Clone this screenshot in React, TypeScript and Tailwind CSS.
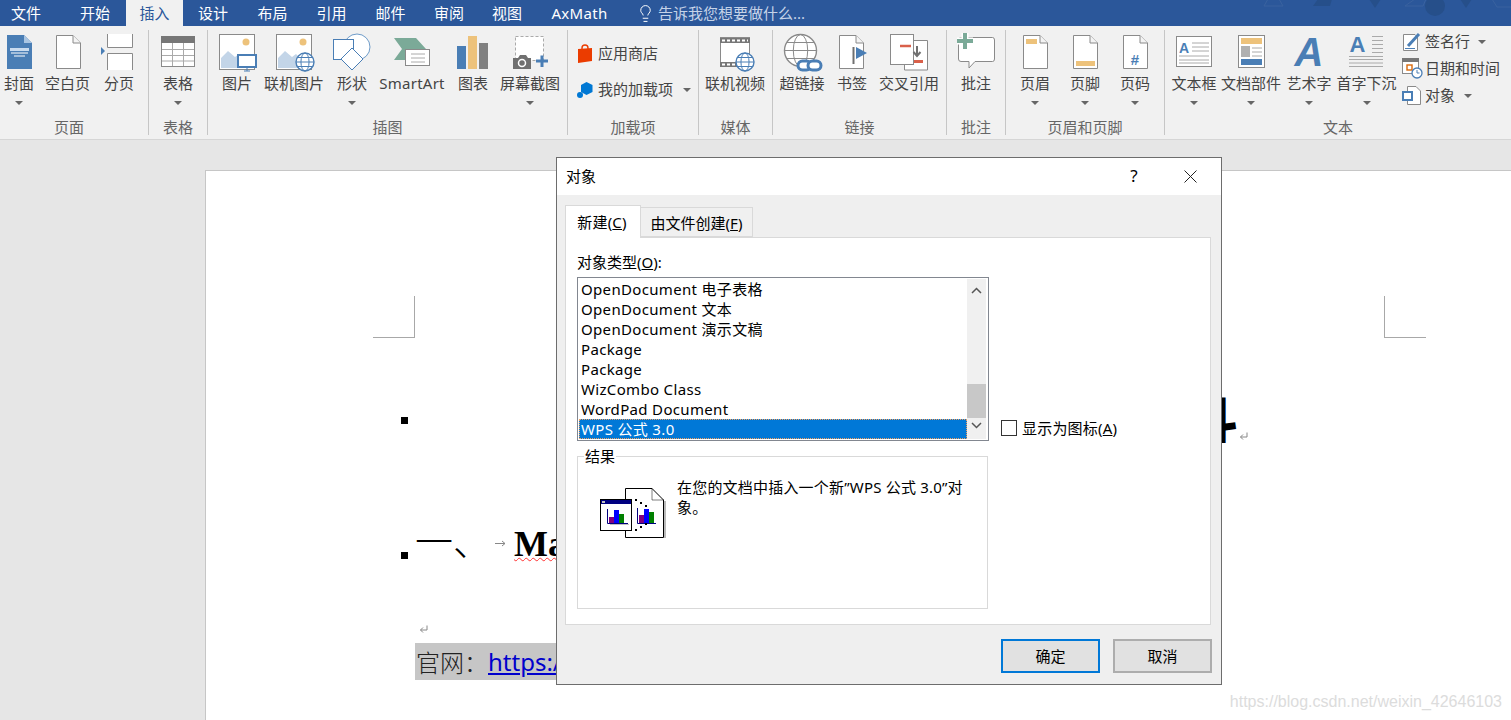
import { Lightbulb } from 'lucide-react';
import type { ReactNode } from 'react';

const BLUE = '#4a7eb5';
const GRAY = '#8a8a8a';
const YELLOW = '#edc27b';
const GREEN = '#7baa98';
const RED = '#d9604a';

function Caret() {
  return <span className="block h-0 w-0 border-x-[4px] border-t-[4px] border-x-transparent border-t-[#666]" />;
}

function Icon({ children }: { children: ReactNode }) {
  return (
    <svg width="40" height="36" viewBox="0 0 40 36" className="overflow-visible" fill="none">
      {children}
    </svg>
  );
}

function Page({ x = 8, fill = 'white' }: { x?: number; fill?: string }) {
  return (
    <>
      <path d={`M${x + 0.5} 2.5H${x + 17}L${x + 24.5} 10V35.5H${x + 0.5}Z`} fill={fill} stroke={GRAY} />
      <path d={`M${x + 17} 2.5V10H${x + 24.5}`} stroke={GRAY} fill="#f4f4f4" />
    </>
  );
}

function Globe({ cx, cy, r = 9, color = BLUE }: { cx: number; cy: number; r?: number; color?: string }) {
  return (
    <g stroke={color} fill="white">
      <circle cx={cx} cy={cy} r={r} strokeWidth="1.4" />
      <ellipse cx={cx} cy={cy} rx={r * 0.45} ry={r} fill="none" />
      <path d={`M${cx - r} ${cy}H${cx + r}M${cx - r * 0.85} ${cy - r * 0.5}H${cx + r * 0.85}M${cx - r * 0.85} ${cy + r * 0.5}H${cx + r * 0.85}`} />
    </g>
  );
}

function Picture({ children }: { children: ReactNode }) {
  return (
    <Icon>
      <rect x="2.5" y="1.5" width="35" height="35" fill="white" stroke={GRAY} />
      <circle cx="29" cy="9" r="3.5" fill={YELLOW} />
      <path d="M4 35V25L11 18L18 24L22 21L28 27V35Z" fill="#c3d5e8" />
      {children}
    </Icon>
  );
}

const icons: Record<string, ReactNode> = {
  cover: (
    <Icon>
      <path d="M8 2H25L33 10V36H8Z" fill={BLUE} />
      <path d="M25 2L33 10H25Z" fill="#a9c5e2" />
      <path d="M11 15H30V18H11Z" fill="#c9dbee" />
      <path d="M12 20H29M15 23H26" stroke="white" />
    </Icon>
  ),
  blank: (
    <Icon>
      <Page />
    </Icon>
  ),
  pageBreak: (
    <Icon>
      <path d="M8.5 1V14.5H33.5V1M8.5 37V20.5H33.5V37" fill="white" stroke={GRAY} />
      <path d="M2 14L6 18L2 22Z" fill={BLUE} />
    </Icon>
  ),
  table: (
    <Icon>
      <rect x="3.5" y="3.5" width="33" height="30" fill="white" stroke={GRAY} />
      <rect x="3" y="3" width="34" height="7" fill="#777" />
      <path d="M14.5 10V33M25.5 10V33M4 16.5H36M4 22.5H36M4 28H36" stroke="#aaa" />
    </Icon>
  ),
  picture: (
    <Picture>
      <rect x="21" y="22" width="18" height="12" fill="white" stroke={BLUE} strokeWidth="2" />
      <path d="M30 35V38M27 38H33" stroke={BLUE} />
    </Picture>
  ),
  onlinePicture: (
    <Picture>
      <Globe cx={31} cy={29} />
    </Picture>
  ),
  shapes: (
    <Icon>
      <circle cx="25" cy="14" r="13" fill="white" stroke="#6f9cc9" />
      <rect x="1.5" y="6.5" width="20" height="20" fill="white" stroke={BLUE} />
      <path d="M20 15L31 26L20 37L9 26Z" fill="white" stroke={BLUE} />
    </Icon>
  ),
  smartArt: (
    <Icon>
      <path d="M2 5H24L34 16L24 27H2L10 16Z" fill={GREEN} />
      <rect x="13.5" y="16.5" width="24" height="16" fill="white" stroke={GRAY} />
      <path d="M19 21H33M19 25H33M19 29H33" stroke="#aaa" />
    </Icon>
  ),
  chart: (
    <Icon>
      <rect x="4" y="13" width="9" height="23" fill={BLUE} />
      <rect x="15" y="3" width="9" height="33" fill={YELLOW} />
      <rect x="26" y="10" width="9" height="26" fill="#808080" />
    </Icon>
  ),
  screenshot: (
    <Icon>
      <rect x="5.5" y="3.5" width="28" height="24" fill="white" stroke="#aaa" strokeDasharray="3 2" />
      <path d="M3 25H8L10 22H16L18 25H21V36H3Z" fill="#707070" />
      <circle cx="12" cy="30" r="3.5" fill="#707070" stroke="white" strokeWidth="1.5" />
      <path d="M32 22.5V34M26 28H38" stroke={BLUE} strokeWidth="3" />
    </Icon>
  ),
  video: (
    <Icon>
      <rect x="5.5" y="4.5" width="29" height="29" fill="white" stroke={GRAY} />
      <path d="M5 5H35V10H5ZM5 29H30V34H5Z" fill="#777" />
      <path d="M7 7.5H33M7 31.5H28" stroke="white" strokeWidth="2" strokeDasharray="3 2" />
      <Globe cx={30} cy={29} />
    </Icon>
  ),
  hyperlink: (
    <Icon>
      <Globe cx={18.5} cy={17.5} r={16} color={GRAY} />
      <g fill="white" stroke={BLUE} strokeWidth="3">
        <rect x="16" y="28" width="13" height="9" rx="4.5" />
        <rect x="26" y="28" width="13" height="9" rx="4.5" />
      </g>
    </Icon>
  ),
  bookmark: (
    <Icon>
      <Page x={7} />
      <path d="M21.5 14V31" stroke="#707070" strokeWidth="2" />
      <path d="M24 14L35 20L24 26Z" fill={BLUE} />
    </Icon>
  ),
  crossRef: (
    <Icon>
      <path d="M15.5 7.5H38.5V37H15.5Z" fill="white" stroke={GRAY} />
      <rect x="1.5" y="1.5" width="23" height="30" fill="white" stroke={GRAY} />
      <path d="M11 13H22" stroke={RED} strokeWidth="2.5" />
      <path d="M28 13V22M24.5 19L28 23L31.5 19" stroke="#707070" strokeWidth="2" />
      <path d="M25 28.5H34" stroke={RED} strokeWidth="3" />
    </Icon>
  ),
  comment: (
    <Icon>
      <path d="M5 4.5H36.5Q38.5 4.5 38.5 7V26Q38.5 28.5 36.5 28.5H19L13 35V28.5H5Q2.5 28.5 2.5 26V7Q2.5 4.5 5 4.5Z" fill="white" stroke={GRAY} />
      <path d="M9 0V16M1 8H17" stroke="white" strokeWidth="7" />
      <path d="M9 0V16M1 8H17" stroke={GREEN} strokeWidth="4" />
    </Icon>
  ),
  header: (
    <Icon>
      <Page />
      <rect x="11" y="6" width="11" height="5" fill={YELLOW} />
    </Icon>
  ),
  footer: (
    <Icon>
      <Page />
      <rect x="11" y="28" width="19" height="5" fill={YELLOW} />
    </Icon>
  ),
  pageNumber: (
    <Icon>
      <Page />
      <text x="20" y="32" textAnchor="middle" fontSize="15" fontWeight="700" fill={BLUE} fontFamily="Liberation Sans">
        #
      </text>
    </Icon>
  ),
  textBox: (
    <Icon>
      <rect x="2.5" y="3.5" width="35" height="30" fill="white" stroke={GRAY} />
      <text x="10" y="20" textAnchor="middle" fontSize="14" fontWeight="700" fill={BLUE} fontFamily="Liberation Sans">
        A
      </text>
      <path d="M18 10H35M18 14H35M18 18H35M5 23H35M5 27H35M5 30H35" stroke="#aaa" />
    </Icon>
  ),
  parts: (
    <Icon>
      <rect x="7.5" y="2.5" width="26" height="32" fill="white" stroke={GRAY} />
      <rect x="10" y="5" width="21" height="6" fill={YELLOW} />
      <rect x="10" y="13" width="9" height="11" fill="#b0b0b0" />
      <path d="M21 15H31M21 19H31M21 23H31" stroke="#aaa" />
      <rect x="10" y="26" width="21" height="6" fill={BLUE} />
    </Icon>
  ),
  wordArt: (
    <Icon>
      <text x="20" y="33" textAnchor="middle" fontSize="40" fontWeight="700" fontStyle="italic" fill={BLUE} fontFamily="Liberation Sans">
        A
      </text>
    </Icon>
  ),
  dropCap: (
    <Icon>
      <text x="10.5" y="19" textAnchor="middle" fontSize="22" fontWeight="700" fill={BLUE} fontFamily="Liberation Sans">
        A
      </text>
      <path d="M25 3.5H36M25 7.5H36M25 11.5H36M25 15.5H36M25 19.5H36M2 23.5H36M2 26.5H36M2 30H36M2 33.5H36" stroke="#aaa" />
    </Icon>
  ),
};

function RibbonButton({ w, label, icon, caret = false, labelClass = '' }: { w: string; label: string; icon: string; caret?: boolean; labelClass?: string }) {
  return (
    <div className={`flex shrink-0 flex-col items-center ${w}`}>
      <div className="mt-[3px] h-[36px] w-[40px]">{icons[icon]}</div>
      <span className={`mt-[5px] whitespace-nowrap leading-[18px] ${labelClass}`}>{label}</span>
      {caret && (
        <span className="mt-[9px]">
          <Caret />
        </span>
      )}
    </div>
  );
}

function Group({ w, label, labelClass = '', last = false, children }: { w: string; label: string; labelClass?: string; last?: boolean; children: ReactNode }) {
  return (
    <section className={`flex h-[105px] shrink-0 flex-col ${w} ${last ? '' : 'border-r border-[#c6c6c6]'}`}>
      <div className="flex h-[89px]">{children}</div>
      <div className={`text-center leading-[16px] text-[#666] ${labelClass}`}>{label}</div>
    </section>
  );
}

function SmallItem({ icon, label, caret, gap }: { icon: ReactNode; label: string; caret?: boolean; gap: string }) {
  return (
    <div className={`flex h-[27px] items-center whitespace-nowrap ${gap}`}>
      {icon}
      <span>{label}</span>
      {caret && (
        <span className="ml-[5px]">
          <Caret />
        </span>
      )}
    </div>
  );
}

function Ribbon() {
  return (
    <div className="flex h-[114px] border-b border-[#d6d6d6] bg-[#f1f1f1] pt-[4px] text-[15px] text-[#444]">
      <Group w="w-[149px]" label="页面" labelClass="pr-[10px]">
        <RibbonButton w="w-[38px]" label="封面" icon="cover" caret />
        <RibbonButton w="w-[59px]" label="空白页" icon="blank" />
        <RibbonButton w="w-[44px]" label="分页" icon="pageBreak" />
      </Group>
      <Group w="w-[59px]" label="表格">
        <RibbonButton w="w-[58px]" label="表格" icon="table" caret />
      </Group>
      <Group w="w-[360px]" label="插图">
        <RibbonButton w="w-[58px]" label="图片" icon="picture" />
        <RibbonButton w="w-[56px]" label="联机图片" icon="onlinePicture" />
        <RibbonButton w="w-[60px]" label="形状" icon="shapes" caret />
        <RibbonButton w="w-[60px]" label="SmartArt" icon="smartArt" labelClass="tracking-[0.25px]" />
        <RibbonButton w="w-[62px]" label="图表" icon="chart" />
        <RibbonButton w="w-[52px]" label="屏幕截图" icon="screenshot" caret />
      </Group>
      <Group w="w-[131px]" label="加载项">
        <div className="flex flex-col pl-[9px] pt-[10px]">
          <SmallItem
            gap="gap-[5px]"
            label="应用商店"
            icon={
              <svg width="16" height="20" viewBox="0 0 16 20" fill="none">
                <path d="M5 6V4Q5 1 8 1Q11 1 11 4V6" stroke="#eb3c00" strokeWidth="1.4" />
                <path d="M1 5L15 4V17L1 19Z" fill="#eb3c00" />
              </svg>
            }
          />
          <div className="mt-[9px]">
            <SmallItem
              gap="gap-[5px]"
              label="我的加载项"
              caret
              icon={
                <svg width="16" height="18" viewBox="0 0 16 18" fill="none">
                  <path d="M9.5 1L15.5 4V11L9.5 14L4 11V4Z" fill="#0078d4" />
                  <circle cx="3" cy="14" r="3" fill="#0078d4" />
                </svg>
              }
            />
          </div>
        </div>
      </Group>
      <Group w="w-[74px]" label="媒体">
        <RibbonButton w="w-[72px]" label="联机视频" icon="video" />
      </Group>
      <Group w="w-[174px]" label="链接">
        <RibbonButton w="w-[58px]" label="超链接" icon="hyperlink" />
        <RibbonButton w="w-[42px]" label="书签" icon="bookmark" />
        <RibbonButton w="w-[72px]" label="交叉引用" icon="crossRef" />
      </Group>
      <Group w="w-[59px]" label="批注">
        <RibbonButton w="w-[58px]" label="批注" icon="comment" />
      </Group>
      <Group w="w-[159px]" label="页眉和页脚">
        <RibbonButton w="w-[58px]" label="页眉" icon="header" caret />
        <RibbonButton w="w-[42px]" label="页脚" icon="footer" caret />
        <RibbonButton w="w-[58px]" label="页码" icon="pageNumber" caret />
      </Group>
      <Group w="w-[346px]" label="文本" last>
        <RibbonButton w="w-[58px]" label="文本框" icon="textBox" caret />
        <RibbonButton w="w-[56px]" label="文档部件" icon="parts" caret />
        <RibbonButton w="w-[60px]" label="艺术字" icon="wordArt" caret />
        <RibbonButton w="w-[55px]" label="首字下沉" icon="dropCap" caret />
        <div className="-mt-[2px] ml-[8px] flex flex-col">
          <SmallItem
            gap="gap-[3px]"
            label="签名行"
            caret
            icon={
              <svg width="20" height="20" viewBox="0 0 20 20" fill="none">
                <path d="M1.5 2.5H13L15.5 5V18.5H1.5Z" fill="white" stroke={GRAY} />
                <path d="M3 16.5H13" stroke={BLUE} />
                <path d="M6 14L17 2" stroke={BLUE} strokeWidth="3" />
              </svg>
            }
          />
          <SmallItem
            gap="gap-[2px]"
            label="日期和时间"
            icon={
              <svg width="21" height="21" viewBox="0 0 21 21" fill="none">
                <rect x="0.5" y="0.5" width="16" height="15" fill="white" stroke={GRAY} />
                <rect x="0" y="0" width="17" height="4" fill="#777" />
                <rect x="5" y="7" width="5" height="5" fill="white" stroke="#d9680a" strokeWidth="1.4" />
                <circle cx="15" cy="15" r="5" fill="white" stroke={BLUE} strokeWidth="1.3" />
                <path d="M15 12V15H17.5" stroke={BLUE} />
              </svg>
            }
          />
          <SmallItem
            gap="gap-[4px]"
            label="对象"
            caret
            icon={
              <svg width="19" height="19" viewBox="0 0 19 19" fill="none">
                <path d="M5.5 0.5H14L18.5 5V18.5H5.5Z" fill="white" stroke={GRAY} />
                <rect x="1" y="6" width="9" height="8" fill="white" stroke={BLUE} strokeWidth="2" />
              </svg>
            }
          />
        </div>
      </Group>
    </div>
  );
}

function TabBar() {
  return (
    <div className="relative flex h-[26px] items-center bg-[#2b579a] text-[15px] text-white">
      <span className="w-[52px] text-center">文件</span>
      <span className="ml-[17px] w-[52px] text-center">开始</span>
      <span className="ml-[5px] flex h-full w-[57px] items-center justify-center bg-[#f1f1f1] text-[#2b579a]">插入</span>
      <span className="w-[60px] text-center">设计</span>
      <span className="w-[59px] text-center">布局</span>
      <span className="w-[59px] text-center">引用</span>
      <span className="w-[59px] text-center">邮件</span>
      <span className="w-[58px] text-center">审阅</span>
      <span className="w-[58px] text-center">视图</span>
      <span className="w-[87px] text-center tracking-[0.3px]">AxMath</span>
      <Lightbulb className="ml-[13px] shrink-0" size={19} strokeWidth={1.25} />
      <span className="ml-[3px] text-[#c5d3e8]">告诉我您想要做什么...</span>
      <svg className="absolute right-0 top-0" width="251" height="26" viewBox="0 0 251 26" fill="none">
        <path d="M8 -1L4 6H23L19 -1" stroke="#3a629f" />
        <path d="M58 -1L53 6H70L72 -1Z" fill="#264f8a" />
        <path d="M109 -1L115 8L121 -1Z" fill="#264f8a" />
        <path d="M155 -1L145 6H163L166 -1" stroke="#3a629f" />
        <circle cx="175" cy="6" r="10" fill="#264f8a" />
        <path d="M200 -1L206 8L212 -1Z" fill="#264f8a" />
        <path d="M232 -1L237 7H251" stroke="#3a629f" />
      </svg>
    </div>
  );
}

function Pilcrow() {
  return (
    <svg width="9" height="9" viewBox="0 0 9 9" fill="none" stroke="#888">
      <path d="M8 0.5V5H1.5M4 2.5L1.5 5L4 7.5" />
    </svg>
  );
}

function Bullet() {
  return <span className="block h-[7px] w-[7px] shrink-0 bg-black" />;
}

function Document() {
  return (
    <div className="flex-1 overflow-hidden bg-[#e6e6e6] pl-[205px] pt-[30px]">
      <div className="h-full border-l border-t border-[#c6c6c6] bg-white pl-[195px] pt-[125px]">
        <div className="-ml-[28px] flex justify-between pr-[85px]">
          <div className="h-[42px] w-[42px] border-b border-r border-[#a8a8a8]" />
          <div className="h-[42px] w-[42px] border-b border-l border-[#a8a8a8]" />
        </div>
        <div className="mt-[57px] flex h-[50px] items-start">
          <span className="mt-[22px]">
            <Bullet />
          </span>
          <span className="ml-[782px] text-[48px] font-black leading-[50px] text-black">斗</span>
          <span className="ml-[1px] mt-[37px]">
            <Pilcrow />
          </span>
        </div>
        <div className="mt-[77px] flex h-[41px] items-start">
          <span className="mt-[30px]">
            <Bullet />
          </span>
          <span className="ml-[7px] font-['Liberation_Serif','Noto_Sans_CJK_SC',serif] text-[38px] font-light leading-[40px] text-black">一、</span>
          <span className="ml-[1px] mt-[18px] flex w-[27px]">
            <svg className="ml-[3px]" width="11" height="7" viewBox="0 0 11 7" fill="none" stroke="#888">
              <path d="M0 3.5H10M7 1L10 3.5L7 6" />
            </svg>
          </span>
          <span className="-ml-[5px] mt-[2px] font-['Liberation_Serif',serif] text-[36px] font-bold leading-[40px] text-black underline decoration-[#f33] decoration-wavy decoration-1 underline-offset-[1px]">
            Math
          </span>
        </div>
        <div className="ml-[18px] mt-[62px] h-[9px]">
          <Pilcrow />
        </div>
        <div className="ml-[14px] mt-[9px] flex h-[37px] w-[500px] items-center whitespace-nowrap bg-[#c6c6c6] pl-[1px] text-[24px] leading-[37px]">
          <span className="font-['Noto_Sans_CJK_SC',serif] font-light text-[#222]">官网：</span>
          <span className="text-[#0000cc] underline">https://www.amyxun.com</span>
        </div>
      </div>
    </div>
  );
}

const objectTypes = [
  'OpenDocument 电子表格',
  'OpenDocument 文本',
  'OpenDocument 演示文稿',
  'Package',
  'Package',
  'WizCombo Class',
  'WordPad Document',
];

function ObjectList() {
  return (
    <div className="mt-[5px] flex h-[164px] border border-[#828790] bg-white p-[1px] pr-[2px]">
      <ul className="flex-1 tracking-[0.33px]">
        {objectTypes.map((item, i) => (
          <li key={i} className="h-[20px] whitespace-nowrap pl-[2px] leading-[20px]">
            {item}
          </li>
        ))}
        <li className="h-[20px] whitespace-nowrap border border-dotted border-[#f0a060] bg-[#0078d7] pl-[1px] leading-[18px] text-white">WPS 公式 3.0</li>
      </ul>
      <div className="flex w-[19px] flex-col items-center bg-[#f0f0f0]">
        <svg className="mt-[8px]" width="11" height="7" viewBox="0 0 11 7" fill="none" stroke="#555" strokeWidth="1.5">
          <path d="M1 6L5.5 1.5L10 6" />
        </svg>
        <div className="mt-[90px] h-[34px] w-full bg-[#c8c8c8]" />
        <svg className="mt-[4px]" width="11" height="7" viewBox="0 0 11 7" fill="none" stroke="#555" strokeWidth="1.5">
          <path d="M1 1L5.5 5.5L10 1" />
        </svg>
      </div>
    </div>
  );
}

function ResultIcon() {
  return (
    <svg width="66" height="50" viewBox="0 0 66 50" fill="none" className="shrink-0">
      <path d="M25.5 0.5H52L63.5 12V49.5H25.5Z" fill="white" stroke="black" />
      <path d="M52 0.5V12H63.5" stroke="black" strokeDasharray="1 1" />
      <path d="M65 13V50.5H27" stroke="#777" />
      <path d="M37.5 20V35.5H56" stroke="#000080" />
      <rect x="39" y="27" width="5" height="8" fill="#800080" />
      <rect x="44" y="21" width="5" height="14" fill="#0000ff" />
      <rect x="49" y="24" width="5" height="11" fill="#008000" />
      <rect x="0.5" y="11.5" width="31" height="31" fill="white" stroke="black" />
      <rect x="1" y="12" width="30" height="4" fill="#000080" />
      <rect x="2" y="13" width="3" height="2" fill="#c0c0c0" />
      <path d="M7.5 21V35.5H28" stroke="#000080" />
      <path d="M10 36.5H29" stroke="#c0c0c0" />
      <rect x="9" y="29" width="5" height="6" fill="#800080" />
      <rect x="14" y="22" width="5" height="13" fill="#0000ff" />
      <rect x="19" y="26" width="5" height="9" fill="#008000" />
      <g fill="black">
        <rect x="35" y="11" width="2" height="2" />
        <rect x="40" y="14" width="2" height="2" />
        <rect x="45" y="17" width="2" height="2" />
        <rect x="45" y="35" width="2" height="2" />
        <rect x="40" y="38" width="2" height="2" />
        <rect x="35" y="41" width="2" height="2" />
      </g>
    </svg>
  );
}

function Dialog() {
  return (
    <div className="absolute left-[556px] top-[157px] flex h-[528px] w-[666px] flex-col border border-[#6d6d6d] bg-[#efefef] text-[15px] leading-[20px] text-black">
      <div className="flex h-[37px] shrink-0 items-center bg-white pb-[1px] pl-[9px]">
        <span className="flex-1">对象</span>
        <span className="w-[14px] text-center text-[17px]">?</span>
        <svg className="ml-[43px] mr-[24px]" width="13" height="13" viewBox="0 0 13 13" fill="none" stroke="#222">
          <path d="M0.5 0.5L12.5 12.5M12.5 0.5L0.5 12.5" />
        </svg>
      </div>
      <div className="flex h-[42px] shrink-0 items-end pl-[8px]">
        <div className="relative z-10 -mb-[1px] flex h-[33px] w-[76px] items-center justify-center border border-b-0 border-[#d9d9d9] bg-white pr-[2px]">
          <span className="tracking-[0.2px]">
            新建(<u>C</u>)
          </span>
        </div>
        <div className="flex h-[30px] w-[112px] items-center justify-center border-y border-r border-[#d9d9d9] bg-[#f0f0f0] pt-[1px]">
          <span>
            由文件创建(<u>F</u>)
          </span>
        </div>
      </div>
      <div className="ml-[8px] mr-[10px] flex h-[388px] shrink-0 border border-[#d9d9d9] bg-white pl-[11px] pt-[14px]">
        <div className="w-[412px] shrink-0">
          <div>
            对象类型(<u>O</u>):
          </div>
          <ObjectList />
          <div className="relative mt-[15px] flex h-[153px] w-[411px] items-start gap-[11px] border border-[#d9d9d9] pl-[22px] pt-[20px]">
            <span className="absolute -top-[11px] left-[6px] bg-white px-[1px]">结果</span>
            <div className="pt-[11px]">
              <ResultIcon />
            </div>
            <p className="w-[290px] tracking-[0.2px]">在您的文档中插入一个新”WPS 公式 3.0”对象。</p>
          </div>
        </div>
        <div className="ml-[12px] mt-[168px] flex h-[16px] items-center gap-[5px] whitespace-nowrap">
          <span className="block h-[16px] w-[16px] border border-[#333] bg-white" />
          <span className="tracking-[0.2px]">
            显示为图标(<u>A</u>)
          </span>
        </div>
      </div>
      <div className="mr-[9px] mt-[14px] flex justify-end gap-[13px]">
        <button className="h-[34px] w-[99px] border-2 border-[#0078d7] bg-[#e1e1e1]">确定</button>
        <button className="h-[34px] w-[99px] border-2 border-[#adadad] bg-[#e1e1e1]">取消</button>
      </div>
    </div>
  );
}

export default function App() {
  return (
    <div className="relative flex h-[720px] w-[1511px] flex-col overflow-hidden font-['Noto_Sans','Noto_Sans_CJK_SC',sans-serif]">
      <TabBar />
      <Ribbon />
      <Document />
      <Dialog />
      <div className="absolute bottom-[8px] right-[9px] font-['Liberation_Sans',sans-serif] text-[16px] leading-[20px] text-[#dcdcdc]">
        https://blog.csdn.net/weixin_42646103
      </div>
    </div>
  );
}
